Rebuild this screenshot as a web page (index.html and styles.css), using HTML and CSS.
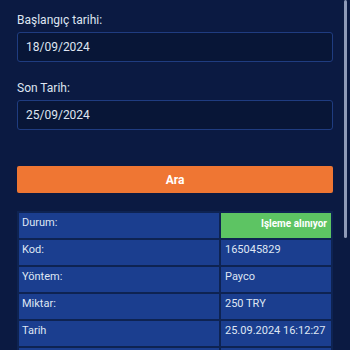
FILE: index.html
```html
<!DOCTYPE html>
<html lang="tr">
<head>
<meta charset="utf-8">
<link rel="stylesheet" href="styles.css">
</head>
<body>
<div class="page">
  <div class="field">
    <label class="label">Başlangıç tarihi:</label>
    <div class="input">18/09/2024</div>
  </div>
  <div class="field field-second">
    <label class="label">Son Tarih:</label>
    <div class="input">25/09/2024</div>
  </div>
  <button class="btn">Ara</button>
  <table class="info">
    <tr><td class="k">Durum:</td><td class="v status">Işleme alınıyor</td></tr>
    <tr><td class="k">Kod:</td><td class="v">165045829</td></tr>
    <tr><td class="k">Yöntem:</td><td class="v">Payco</td></tr>
    <tr><td class="k">Miktar:</td><td class="v">250 TRY</td></tr>
    <tr><td class="k">Tarih</td><td class="v">25.09.2024 16:12:27</td></tr>
    <tr><td class="k">&nbsp;</td><td class="v">&nbsp;</td></tr>
  </table>
</div>
<div class="scrollbar"></div>
</body>
</html>
```
FILE: styles.css
```css
html, body {
  margin: 0;
  padding: 0;
  background: #0b1a42;
  overflow: hidden;
}
body {
  font-family: Roboto, "Liberation Sans", sans-serif;
  color: #e1e7f2;
}
.page {
  padding: 12px 17px 0 17px;
  display: flex;
  flex-direction: column;
}
.field {
  display: flex;
  flex-direction: column;
  gap: 4px;
}
.field-second {
  margin-top: 18px;
}
.label {
  font-size: 12px;
  line-height: 16px;
  color: #dfe5f1;
}
.input {
  box-sizing: border-box;
  height: 30px;
  border: 1px solid #1f3c80;
  border-radius: 3px;
  background: #081637;
  font-size: 12px;
  line-height: 29px;
  padding-left: 8px;
  color: #dfe5f1;
}
.btn {
  margin-top: 36px;
  height: 27px;
  border: none;
  border-radius: 2px;
  background: #ef7633;
  color: #ffffff;
  font-family: Roboto, "Liberation Sans", sans-serif;
  font-weight: 700;
  font-size: 12px;
  padding: 0;
}
.info {
  margin-top: 18px;
  width: 316px;
  border-collapse: separate;
  border-spacing: 2px;
  background: #0e2352;
  table-layout: fixed;
}
.info td {
  box-sizing: border-box;
  height: 25px;
  padding: 3px 3px 0 3px;
  vertical-align: top;
  font-size: 11px;
  line-height: 13px;
  background: #1b3e8f;
  color: #dfe6f3;
  white-space: nowrap;
  overflow: hidden;
}
.info td.k {
  width: 200px;
}
.info td.v {
  width: 110px;
  padding-left: 4px;
}
.info td.status {
  background: #5dc463;
  color: #ffffff;
  font-weight: 700;
  font-size: 10px;
  text-align: right;
  padding-right: 4px;
  padding-top: 4px;
}
.scrollbar {
  position: fixed;
  top: 0;
  left: 344px;
  width: 3px;
  height: 238px;
  background: #8e9ab8;
  border-radius: 2px;
}
```
